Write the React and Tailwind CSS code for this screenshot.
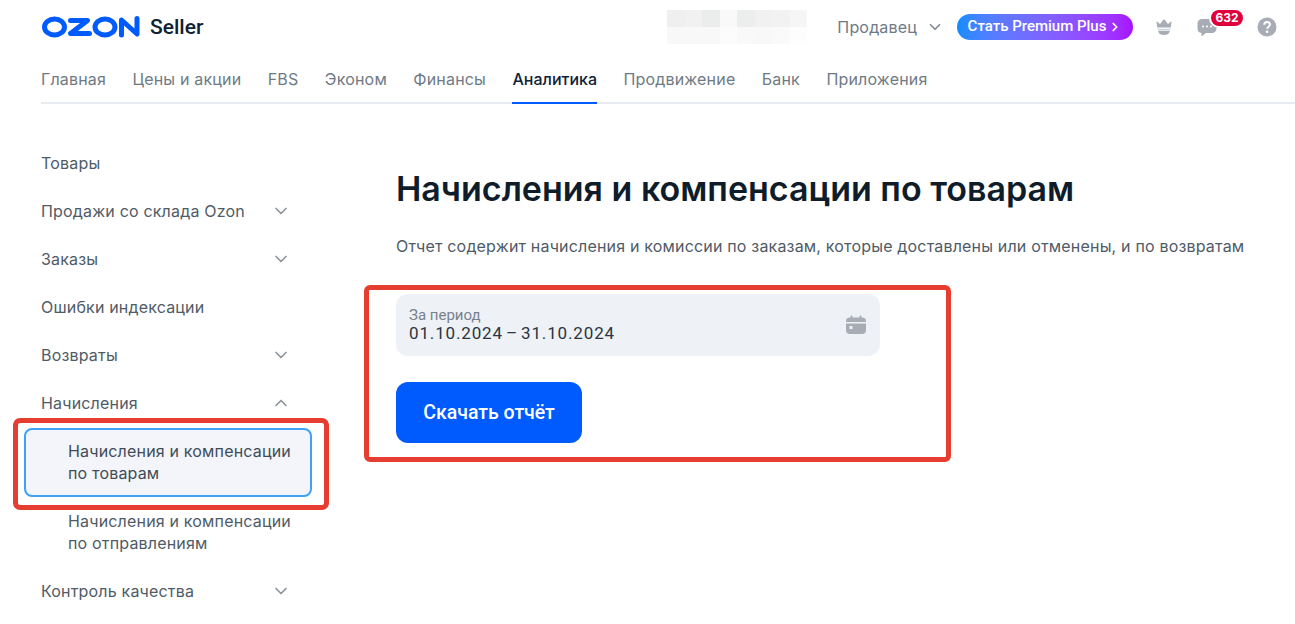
import React from "react";
import { ChevronDown, ChevronUp, ChevronRight } from "lucide-react";

const navItems = ["Главная", "Цены и акции", "FBS", "Эконом", "Финансы", "Аналитика", "Продвижение", "Банк", "Приложения"];

const blurTop = ["bg-[#efefef]", "bg-[#f1f1f1]", "bg-[#ebecec]", "bg-[#f9f9f9]", "bg-[#eceeed]", "bg-[#f1f1f1]", "bg-[#f1f2f1]", "bg-[#f6f6f6]"];
const blurBottom = ["bg-[#f8f8f8]", "bg-[#f8f8f8]", "bg-[#f8f8f8]", "bg-[#fcfcfc]", "bg-[#f8f9f8]", "bg-[#f8f8f8]", "bg-[#fafafa]", "bg-[#fdfdfd]"];

function Logo() {
  return (
    <svg width="100" height="24" viewBox="0 0 100 24" fill="none" stroke="#005bff" strokeWidth="5">
      <ellipse cx="13.500" cy="12" rx="10" ry="8" />
      <path d="M29.500 5.500h17L29.500 18.500h19" strokeLinejoin="round" strokeLinecap="round" />
      <ellipse cx="64" cy="12" rx="10" ry="8" />
      <path d="M80.500 20V5L96 19V3.500" strokeLinejoin="round" strokeLinecap="round" />
    </svg>
  );
}

function Crown() {
  return (
    <svg width="18" height="18" viewBox="0 0 18 18" fill="#a8adb5">
      <path d="M1.500 3 5 6l4-5 4 5 3.500-3-.7 6.500H2.200z" />
      <path d="M2.500 10.700h13l-.4 1.300H2.900z" opacity="0.55" />
      <path d="M3 12.700h12c-.5 2.800-2.600 4.300-6 4.300s-5.500-1.500-6-4.300z" />
    </svg>
  );
}

function Chat() {
  return (
    <svg width="20" height="20" viewBox="0 0 20 20">
      <path d="M5 2h10a4.500 4.500 0 0 1 4.500 4.500v5A4.500 4.500 0 0 1 15 16H9l-4.500 3.500V16A4.500 4.500 0 0 1 .5 11.500v-5A4.500 4.500 0 0 1 5 2z" fill="#a8adb5" />
      <circle cx="6" cy="9.500" r="1" fill="#fff" />
      <circle cx="10" cy="9.500" r="1" fill="#fff" />
      <circle cx="14" cy="9.500" r="1" fill="#fff" />
    </svg>
  );
}

function Help() {
  return (
    <svg width="20" height="20" viewBox="0 0 20 20">
      <circle cx="10" cy="10" r="9.500" fill="#a8adb5" />
      <path d="M7.200 7.800C7.300 6 8.500 5 10.100 5c1.600 0 2.800 1 2.800 2.500 0 2.200-2.700 2.200-2.700 4.300" fill="none" stroke="#fff" strokeWidth="2" />
      <circle cx="10.100" cy="14.700" r="1.300" fill="#fff" />
    </svg>
  );
}

function CalendarIcon() {
  return (
    <svg width="20" height="20" viewBox="0 0 20 20" fill="#a8adb5">
      <rect x="4.500" y="0.500" width="2" height="4" rx="1" />
      <rect x="13.500" y="0.500" width="2" height="4" rx="1" />
      <path d="M4 2.500h12a4 4 0 0 1 4 4V7H0v-.5a4 4 0 0 1 4-4z" />
      <path d="M0 8.500h20V15a4 4 0 0 1-4 4H4a4 4 0 0 1-4-4z" />
      <rect x="3.500" y="11" width="3" height="3" rx="0.500" fill="#eef1f6" />
    </svg>
  );
}

function SideItem({ label, icon: Icon }) {
  return (
    <div className="h-12 w-[250px] flex items-center justify-between">
      <span>{label}</span>
      {Icon && <Icon size={20} strokeWidth={2} className="text-[#8a939e]" />}
    </div>
  );
}

export default function App() {
  return (
    <div className="relative h-[624px] w-[1295px] overflow-hidden bg-white font-['Inter',sans-serif] text-[#4f5b67] tracking-[0.18px]">
      {/* Header */}
      <header className="pl-[41px]">
        <div className="h-[53px] flex items-center pr-[18px]">
          <Logo />
          <span className="ml-[9px] mt-[3px] text-[21px] tracking-normal font-medium text-[#0f2135] font-['Roboto',sans-serif]">Seller</span>
          <div className="ml-auto flex items-center">
            <div className="mr-[30px] w-[140px] grid grid-cols-8">
              {blurTop.map((c, i) => <div key={i} className={`h-[17px] ${c}`} />)}
              {blurBottom.map((c, i) => <div key={i} className={`h-[17px] ${c}`} />)}
            </div>
            <span className="text-[16px] text-[#6f7a85]">Продавец</span>
            <ChevronDown size={18} strokeWidth={2.2} className="ml-[9px] text-[#7f8893]" />
            <button className="ml-[13px] h-[26px] w-[176px] rounded-full bg-gradient-to-r from-[#0a8cff] to-[#a80dff] flex items-center justify-center text-white text-[15px] tracking-normal font-medium font-['Roboto',sans-serif]">
              Стать Premium Plus
              <ChevronRight size={14} strokeWidth={3} className="ml-[2px]" />
            </button>
            <div className="ml-[22px]"><Crown /></div>
            <div className="relative ml-[24px]">
              <Chat />
              <span className="absolute -top-[7px] left-[14px] h-[16px] w-[32px] rounded-full bg-[#e0003c] ring-2 ring-white text-white text-[12px] tracking-normal leading-[16px] font-bold text-center">632</span>
            </div>
            <div className="ml-[40px]"><Help /></div>
          </div>
        </div>
        <nav className="h-[51px] flex gap-[26.4px] border-b-2 border-[#e8ebef] text-[16px] text-[#6f7a85]">
          {navItems.map((item) => (
            <div
              key={item}
              className={item === "Аналитика" ? "h-[51px] pt-[14px] border-b-2 border-[#005bff] text-[#0f2135] font-medium tracking-normal" : "h-[51px] pt-[14px]"}
            >
              {item}
            </div>
          ))}
        </nav>
      </header>

      <div className="flex">
        {/* Sidebar */}
        <aside className="w-[396px] shrink-0 pl-[41px] pt-[35px] text-[16px]">
          <SideItem label="Товары" />
          <SideItem label="Продажи со склада Ozon" icon={ChevronDown} />
          <SideItem label="Заказы" icon={ChevronDown} />
          <SideItem label="Ошибки индексации" />
          <SideItem label="Возвраты" icon={ChevronDown} />
          <SideItem label="Начисления" icon={ChevronUp} />
          <div className="-ml-[17px] mt-px w-[288px] h-[69px] rounded-[8px] border-2 border-[#3fa2f7] bg-[#f3f5fa] pl-[42px] pt-[10px] leading-[22px] text-[#3f4c59]">
            Начисления и компенсации<br />по товарам
          </div>
          <div className="mt-[13px] pl-[27px] leading-[22px]">
            Начисления и компенсации<br />по отправлениям
          </div>
          <div className="mt-[13px]">
            <SideItem label="Контроль качества" icon={ChevronDown} />
          </div>
        </aside>

        {/* Main */}
        <main className="pt-[62px]">
          <h1 className="text-[34px] tracking-normal leading-[46px] font-semibold text-[#0f1d2b]">Начисления и компенсации по товарам</h1>
          <p className="mt-[23px] text-[16px] leading-[22px] text-[#4f5b67]">
            Отчет содержит начисления и комиссии по заказам, которые доставлены или отменены, и по возвратам
          </p>
          <div className="mt-[37px] w-[484px] h-[62px] rounded-[12px] bg-[#eef1f6] pl-[13px] pr-[14px] flex items-center justify-between font-['Roboto',sans-serif] tracking-normal">
            <div>
              <div className="text-[15px] leading-[16px] text-[#77818c]">За период</div>
              <div className="text-[17px] leading-[20px] tracking-[0.85px] text-[#2a3642]">
                01.10.2024 <span className="-mx-[2px]">–</span> 31.10.2024
              </div>
            </div>
            <CalendarIcon />
          </div>
          <button className="mt-[26px] w-[186px] h-[61px] rounded-[12px] bg-[#005bff] text-white text-[19.5px] tracking-normal font-medium font-['Roboto',sans-serif]">
            Скачать отчёт
          </button>
        </main>
      </div>

      {/* Annotation boxes */}
      <div className="absolute left-[13px] top-[418px] w-[316px] h-[92px] rounded-[7px] border-[5px] border-[#e53e30]" />
      <div className="absolute left-[364px] top-[285px] w-[587px] h-[177px] rounded-[6px] border-[5px] border-[#e53e30]" />
    </div>
  );
}
